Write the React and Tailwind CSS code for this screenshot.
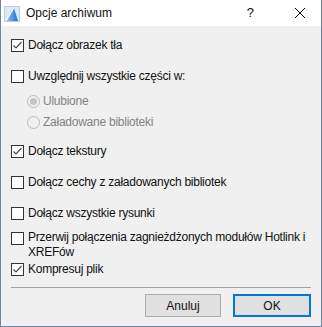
import React from 'react'

function Check({ checked }) {
    return (
        <span className="flex h-[13px] w-[13px] shrink-0 items-center justify-center border border-[#333333] bg-white">
            {checked && (
                <svg width="11" height="11" viewBox="0 0 11 11">
                    <polyline points="1.5,5.5 4,8 9.5,2" fill="none" stroke="#4a4a4a" strokeWidth="1.2" />
                </svg>
            )}
        </span>
    )
}

function CheckRow({ checked, children, className = '' }) {
    return (
        <div className={`flex items-center gap-[4px] ${className}`}>
            <Check checked={checked} />
            <span className="leading-[16px]">{children}</span>
        </div>
    )
}

function Radio({ selected, children, className = '' }) {
    return (
        <div className={`flex items-center gap-[3px] pl-[16px] ${className}`}>
            <span className="flex h-[13px] w-[13px] shrink-0 items-center justify-center rounded-full border border-[#bcbcbc] bg-[#f0f0f0]">
                {selected && <span className="h-[7px] w-[7px] rounded-full bg-[#c4c4c4]" />}
            </span>
            <span className="leading-[16px] text-[#838383]">{children}</span>
        </div>
    )
}

export default function App() {
    return (
        <div
            className="flex h-[327px] w-[322px] flex-col border-x border-b border-[#6f84a0] bg-[#f0f0f0] text-[12px] tracking-[-0.25px] text-[#111]"
            style={{ fontFamily: '"Liberation Sans", Arial, sans-serif' }}
        >
            <div className="flex h-[26px] shrink-0 items-center bg-white pl-[3px] tracking-normal">
                <svg width="16" height="16" viewBox="0 0 16 16" className="mt-[2px]">
                    <defs>
                        <linearGradient id="ac" x1="0" y1="0" x2="1" y2="0">
                            <stop offset="0" stopColor="#9ac4f0" />
                            <stop offset="1" stopColor="#1f6fd0" />
                        </linearGradient>
                    </defs>
                    <rect x="0.5" y="0.5" width="15" height="15" fill="#dce9f7" stroke="#b8cde6" />
                    <path d="M2 15 L10 2 L14 15 Z" fill="url(#ac)" />
                    <path d="M2 15 L10 2" stroke="#ffffff" strokeWidth="1" />
                </svg>
                <span className="ml-[6px] text-[12px] leading-none">Opcje archiwum</span>
                <span className="ml-auto mr-[40px] text-[13px]">?</span>
                <svg width="12" height="12" viewBox="0 0 12 12" className="mr-[15px]">
                    <path d="M1 1 L11 11 M11 1 L1 11" stroke="#000" strokeWidth="1" />
                </svg>
            </div>

            <div className="flex flex-1 flex-col pl-[10px] pr-[10px] pt-[11px]">
                <CheckRow checked>Dołącz obrazek tła</CheckRow>
                <CheckRow className="mt-[15px]">Uwzględnij wszystkie części w:</CheckRow>
                <Radio selected className="mt-[9px]">Ulubione</Radio>
                <Radio className="mt-[5px]">Załadowane biblioteki</Radio>
                <CheckRow checked className="mt-[13px]">Dołącz tekstury</CheckRow>
                <CheckRow className="mt-[15px]">Dołącz cechy z załadowanych bibliotek</CheckRow>
                <CheckRow className="mt-[15px]">Dołącz wszystkie rysunki</CheckRow>
                <div className="mt-[9px] flex items-start gap-[4px]">
                    <span className="mt-[2px]">
                        <Check />
                    </span>
                    <span className="leading-[15px]">
                        Przerwij połączenia zagnieżdżonych modułów Hotlink i XREFów
                    </span>
                </div>
                <CheckRow checked className="mt-[1px]">Kompresuj plik</CheckRow>

                <div className="mt-[10px] h-px bg-[#a0a0a0]" />

                <div className="mt-[6px] flex justify-end gap-[12px] tracking-normal">
                    <button className="h-[23px] w-[76px] border border-[#adadad] bg-[#e1e1e1] text-[12px]">
                        Anuluj
                    </button>
                    <button className="h-[23px] w-[78px] border-2 border-[#0078d7] bg-[#e1e1e1] text-[12px]">
                        OK
                    </button>
                </div>
            </div>
        </div>
    )
}
